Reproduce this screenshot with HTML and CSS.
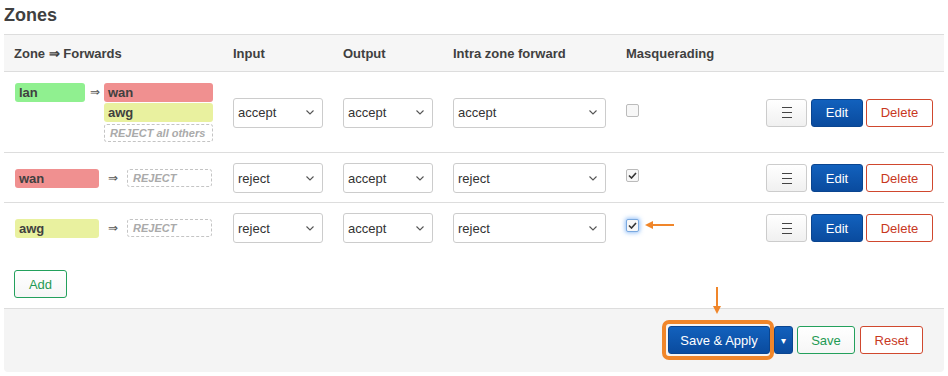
FILE: index.html
```html
<!DOCTYPE html>
<html lang="en">
<head>
    <meta charset="UTF-8">
    <meta name="viewport" content="width=device-width, initial-scale=1.0">
    <title>Firewall - Zones</title>
    <link rel="stylesheet" href="styles.css">
</head>
<body>
    <div class="page">
        <h2 class="section-title">Zones</h2>

        <div class="zones-table">
            <div class="zrow zhead">
                <div class="cell c-zone">Zone &rArr; Forwards</div>
                <div class="cell">Input</div>
                <div class="cell">Output</div>
                <div class="cell">Intra zone forward</div>
                <div class="cell">Masquerading</div>
                <div class="cell"></div>
            </div>

            <!-- lan -->
            <div class="zrow tall">
                <div class="cell c-zone">
                    <div class="zone-fwd">
                        <span class="zbadge lan src-short">lan</span>
                        <span class="fw-arrow arrow-short">&rArr;</span>
                        <div class="fw-list wide">
                            <span class="zbadge wan">wan</span>
                            <span class="zbadge awg">awg</span>
                            <span class="zbadge reject">REJECT all others</span>
                        </div>
                    </div>
                </div>
                <div class="cell"><div class="sel">accept<svg class="chev" width="8" height="5" viewBox="0 0 8 5"><path d="M0.5 0.5 L4 4 L7.5 0.5" fill="none" stroke="#555" stroke-width="1.1"/></svg></div></div>
                <div class="cell"><div class="sel">accept<svg class="chev" width="8" height="5" viewBox="0 0 8 5"><path d="M0.5 0.5 L4 4 L7.5 0.5" fill="none" stroke="#555" stroke-width="1.1"/></svg></div></div>
                <div class="cell"><div class="sel sel-wide">accept<svg class="chev" width="8" height="5" viewBox="0 0 8 5"><path d="M0.5 0.5 L4 4 L7.5 0.5" fill="none" stroke="#555" stroke-width="1.1"/></svg></div></div>
                <div class="cell"><span class="cbox"></span></div>
                <div class="cell actions">
                    <button class="btn btn-menu"><svg width="10" height="11" viewBox="0 0 10 11"><path d="M0 0.5H10M0 5.5H10M0 10.5H10" stroke="#444" stroke-width="1"/></svg></button>
                    <button class="btn btn-edit">Edit</button>
                    <button class="btn btn-delete">Delete</button>
                </div>
            </div>

            <!-- wan -->
            <div class="zrow">
                <div class="cell c-zone">
                    <div class="zone-fwd">
                        <span class="zbadge wan">wan</span>
                        <span class="fw-arrow">&rArr;</span>
                        <div class="fw-list">
                            <span class="zbadge reject">REJECT</span>
                        </div>
                    </div>
                </div>
                <div class="cell"><div class="sel">reject<svg class="chev" width="8" height="5" viewBox="0 0 8 5"><path d="M0.5 0.5 L4 4 L7.5 0.5" fill="none" stroke="#555" stroke-width="1.1"/></svg></div></div>
                <div class="cell"><div class="sel">accept<svg class="chev" width="8" height="5" viewBox="0 0 8 5"><path d="M0.5 0.5 L4 4 L7.5 0.5" fill="none" stroke="#555" stroke-width="1.1"/></svg></div></div>
                <div class="cell"><div class="sel sel-wide">reject<svg class="chev" width="8" height="5" viewBox="0 0 8 5"><path d="M0.5 0.5 L4 4 L7.5 0.5" fill="none" stroke="#555" stroke-width="1.1"/></svg></div></div>
                <div class="cell"><span class="cbox checked"><svg width="9" height="7" viewBox="0 0 9 7"><path d="M1 3.5 L3.5 6 L8 1" fill="none" stroke="#333" stroke-width="1.6"/></svg></span></div>
                <div class="cell actions">
                    <button class="btn btn-menu"><svg width="10" height="11" viewBox="0 0 10 11"><path d="M0 0.5H10M0 5.5H10M0 10.5H10" stroke="#444" stroke-width="1"/></svg></button>
                    <button class="btn btn-edit">Edit</button>
                    <button class="btn btn-delete">Delete</button>
                </div>
            </div>

            <!-- awg -->
            <div class="zrow last">
                <div class="cell c-zone">
                    <div class="zone-fwd">
                        <span class="zbadge awg">awg</span>
                        <span class="fw-arrow">&rArr;</span>
                        <div class="fw-list">
                            <span class="zbadge reject">REJECT</span>
                        </div>
                    </div>
                </div>
                <div class="cell"><div class="sel">reject<svg class="chev" width="8" height="5" viewBox="0 0 8 5"><path d="M0.5 0.5 L4 4 L7.5 0.5" fill="none" stroke="#555" stroke-width="1.1"/></svg></div></div>
                <div class="cell"><div class="sel">accept<svg class="chev" width="8" height="5" viewBox="0 0 8 5"><path d="M0.5 0.5 L4 4 L7.5 0.5" fill="none" stroke="#555" stroke-width="1.1"/></svg></div></div>
                <div class="cell"><div class="sel sel-wide">reject<svg class="chev" width="8" height="5" viewBox="0 0 8 5"><path d="M0.5 0.5 L4 4 L7.5 0.5" fill="none" stroke="#555" stroke-width="1.1"/></svg></div></div>
                <div class="cell">
                    <span class="cbox checked focused"><svg width="9" height="7" viewBox="0 0 9 7"><path d="M1 3.5 L3.5 6 L8 1" fill="none" stroke="#333" stroke-width="1.6"/></svg>
                        <svg class="mark-left" width="30" height="8" viewBox="0 0 30 8"><path d="M6 4H29" stroke="#f0862a" stroke-width="2"/><path d="M0 4 L8 0 L8 8 Z" fill="#f0862a"/></svg>
                    </span>
                </div>
                <div class="cell actions">
                    <button class="btn btn-menu"><svg width="10" height="11" viewBox="0 0 10 11"><path d="M0 0.5H10M0 5.5H10M0 10.5H10" stroke="#444" stroke-width="1"/></svg></button>
                    <button class="btn btn-edit">Edit</button>
                    <button class="btn btn-delete">Delete</button>
                </div>
            </div>

            <div class="add-row">
                <button class="btn btn-add">Add</button>
            </div>

            <div class="page-actions">
                <div class="hl">
                    <button class="btn btn-apply">Save &amp; Apply</button>
                    <svg class="mark-down" width="8" height="28" viewBox="0 0 8 28"><path d="M4 0V22" stroke="#f0862a" stroke-width="2"/><path d="M0 19 L8 19 L4 27 Z" fill="#f0862a"/></svg>
                </div>
                <button class="btn btn-drop">&#9662;</button>
                <button class="btn btn-save">Save</button>
                <button class="btn btn-reset">Reset</button>
            </div>
        </div>
    </div>
</body>
</html>
```

FILE: styles.css
```css
body {
    margin: 0;
    font-family: "Liberation Sans", Arial, sans-serif;
    font-size: 13px;
    color: #404040;
    background-color: #fff;
}

.page {
    margin: 0 4px;
}

.section-title {
    font-size: 18px;
    line-height: 22px;
    font-weight: bold;
    margin: 4px 0 8px 0;
    color: #404040;
}

.zones-table {
    border-top: 1px solid #ddd;
}

.zrow {
    display: grid;
    grid-template-columns: 219px 110px 110px 173px 1fr auto;
    align-items: center;
    padding: 10px 0 9px;
    border-bottom: 1px solid #ddd;
}

.zrow.tall {
    padding: 11px 0 10px;
}

.zrow.last {
    border-bottom: none;
}

.zhead {
    background-color: #f6f6f6;
    font-weight: bold;
    padding: 0;
    height: 36px;
}

.cell {
    padding-left: 10px;
}

.c-zone {
    padding-left: 10px;
}

/* zone badges */
.zone-fwd {
    display: flex;
    align-items: flex-start;
    padding-left: 1px;
}

.zbadge {
    display: block;
    box-sizing: border-box;
    width: 84px;
    height: 19px;
    line-height: 19px;
    padding-left: 4px;
    border-radius: 3px;
    font-weight: bold;
    font-size: 13px;
    color: #404040;
}

.zbadge.lan { background-color: #90f090; }
.zbadge.wan { background-color: #f09090; }
.zbadge.awg { background-color: #e9f19f; }
.zbadge.src-short { width: 70px; }

.fw-list {
    display: flex;
    flex-direction: column;
    gap: 1px;
    width: 85px;
}

.fw-list.wide {
    width: 109px;
}

.fw-list .zbadge {
    width: 100%;
}

.zbadge.reject {
    border: 1px dashed #c4c4c4;
    color: #aaa;
    font-style: italic;
    font-size: 11px;
    line-height: 16px;
    height: 18px;
    padding-left: 5px;
}

.fw-list.wide .zbadge.reject {
    margin-top: 1px;
}

.fw-arrow {
    width: 28px;
    text-align: center;
    font-size: 12px;
    line-height: 19px;
    color: #555;
}

.fw-arrow.arrow-short {
    width: 19px;
}

/* fake selects */
.sel {
    box-sizing: border-box;
    width: 90px;
    height: 30px;
    border: 1px solid #ccc;
    border-radius: 3px;
    background-color: #fff;
    padding: 0 8px 0 4px;
    display: flex;
    align-items: center;
    justify-content: space-between;
    font-size: 13px;
    color: #333;
}

.sel-wide {
    width: 153px;
}

/* checkboxes */
.cbox {
    position: relative;
    box-sizing: border-box;
    display: flex;
    align-items: center;
    justify-content: center;
    width: 13px;
    height: 13px;
    margin-top: -5px;
    border: 1px solid #bbb;
    border-radius: 2px;
    background-color: #f7f7f7;
}

.cbox.focused {
    border-color: #7aa9e0;
    box-shadow: 0 0 4px 1px rgba(60, 140, 240, 0.55);
}

.mark-left {
    position: absolute;
    left: 18px;
    top: 1px;
}

/* buttons */
.actions {
    display: flex;
    gap: 4px;
    padding-right: 11px;
}

.btn {
    box-sizing: border-box;
    height: 28px;
    border-radius: 3px;
    font-family: "Liberation Sans", Arial, sans-serif;
    font-size: 13px;
    padding: 0;
    cursor: pointer;
    border: 1px solid #ccc;
    background: linear-gradient(#fff, #f0f0f0);
    color: #404040;
}

.btn-menu {
    width: 41px;
    display: flex;
    align-items: center;
    justify-content: center;
}

.btn-edit,
.btn-apply,
.btn-drop {
    background: linear-gradient(#1261bd, #0a4b9e);
    border-color: #0a4590;
    color: #fff;
}

.btn-edit {
    width: 52px;
}

.btn-delete,
.btn-reset {
    background: #fff;
    border-color: #d0482e;
    color: #c8381e;
}

.btn-delete {
    width: 67px;
    margin-left: -1px;
}

.add-row {
    padding: 18px 10px 10px;
}

.btn-add,
.btn-save {
    background: linear-gradient(#fff, #f6f6f6);
    border-color: #23a05c;
    color: #1f9a54;
}

.btn-add {
    width: 53px;
}

/* footer actions */
.page-actions {
    display: flex;
    justify-content: flex-end;
    align-items: center;
    gap: 4px;
    padding: 17px 21px 18px 0;
    background-color: #f4f4f4;
    border-top: 1px solid #ddd;
    border-radius: 0 0 4px 4px;
}

.hl {
    position: relative;
    display: flex;
}

.hl::after {
    content: "";
    position: absolute;
    left: -6px;
    right: -4px;
    top: -6px;
    bottom: -6px;
    border: 4px solid #f0862a;
    border-radius: 7px;
}

.mark-down {
    position: absolute;
    left: 45px;
    top: -39px;
}

.btn-apply {
    width: 102px;
}

.btn-drop {
    width: 19px;
    font-size: 10px;
}

.btn-save {
    width: 58px;
}

.btn-reset {
    width: 63px;
    margin-left: 1px;
}
```
